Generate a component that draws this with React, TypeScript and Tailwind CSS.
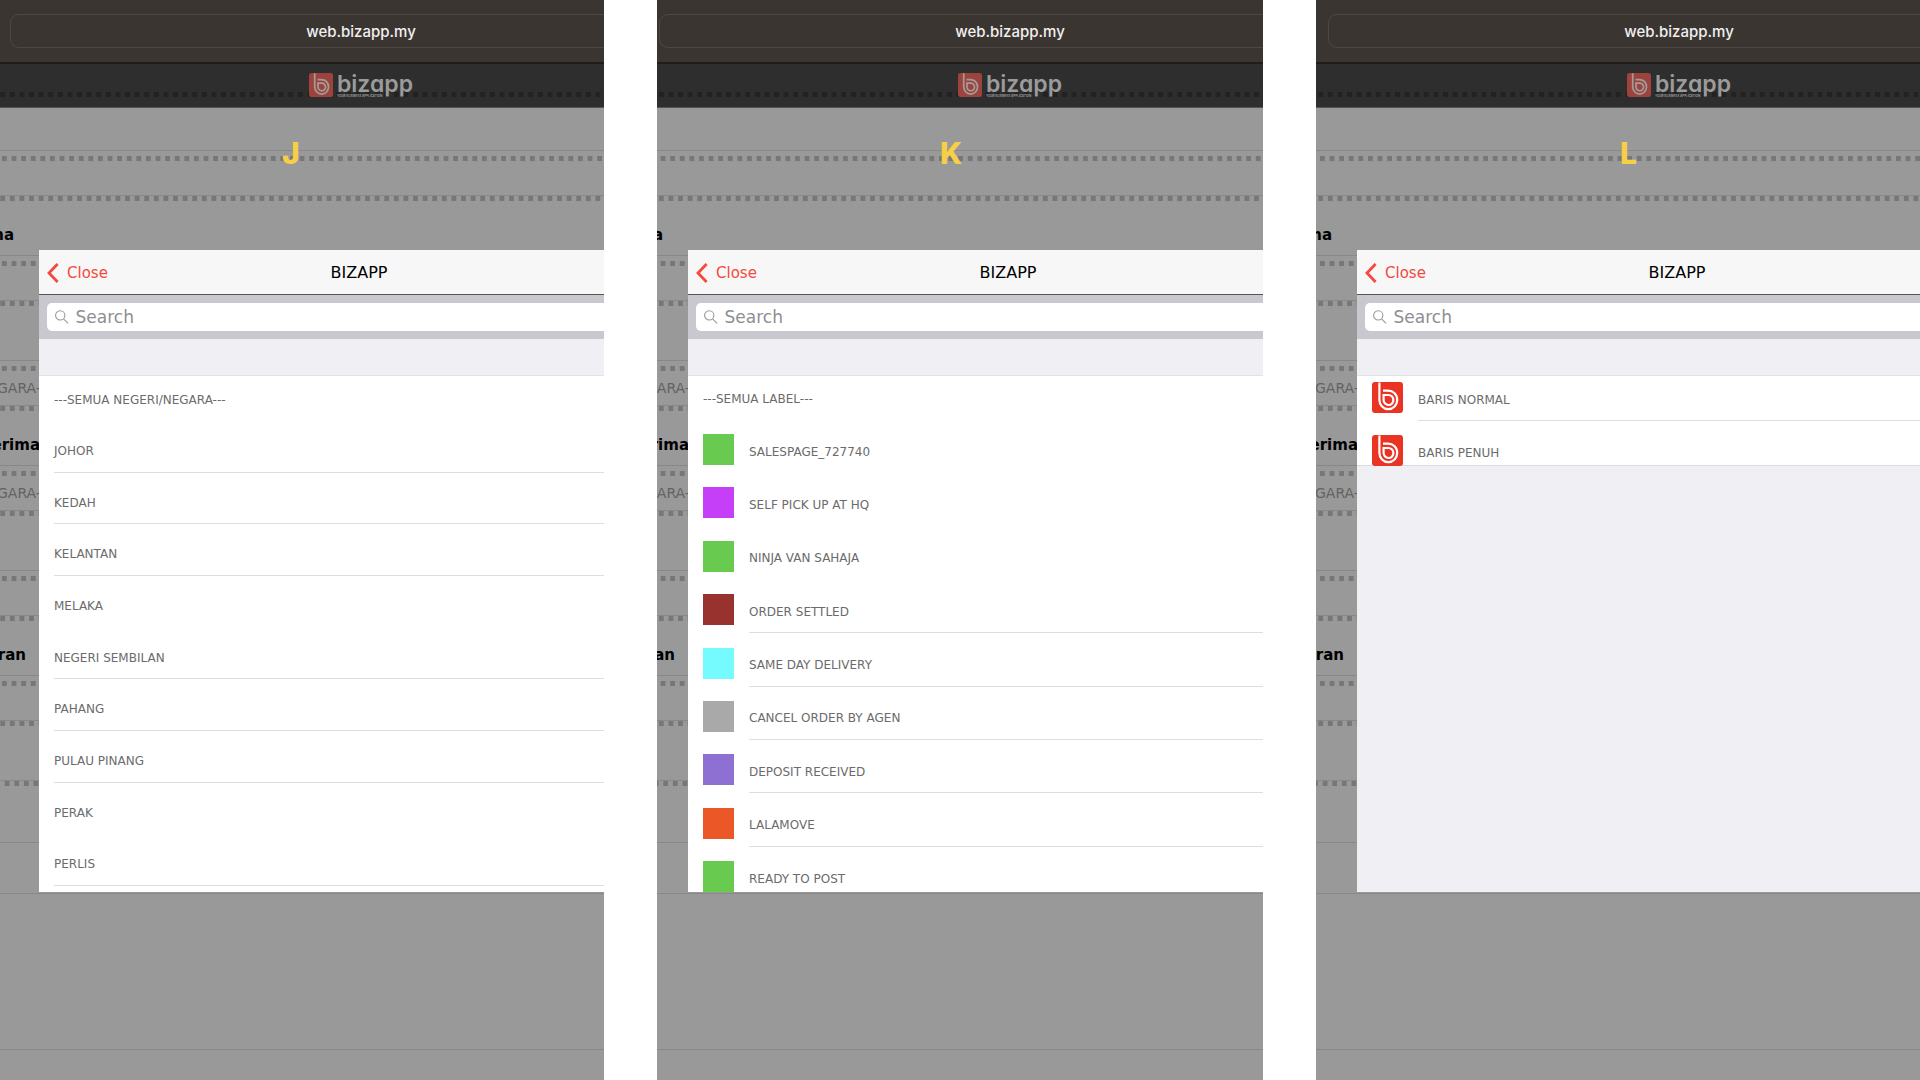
import React from 'react';

interface ListItem {
  label: string;
  color?: string;
  icon?: boolean;
  divider?: boolean;
}

interface Screen {
  id: string;
  shift: string;
  marker: string;
  listClass: string;
  heading?: string;
  items: ListItem[];
}

interface PageRow {
  height: string;
  dots?: 'a' | 'b' | 'c';
  title?: string;
  titleEnd?: string;
  value?: string;
}

const SCREENS: Screen[] = [
  {
    id: 'J',
    shift: '-ml-0.5',
    marker: 'left-[282px]',
    listClass: 'h-[516px] justify-between pb-[6px]',
    items: [
      { label: '---SEMUA NEGERI/NEGARA---' },
      { label: 'JOHOR', divider: true },
      { label: 'KEDAH', divider: true },
      { label: 'KELANTAN', divider: true },
      { label: 'MELAKA' },
      { label: 'NEGERI SEMBILAN', divider: true },
      { label: 'PAHANG', divider: true },
      { label: 'PULAU PINANG', divider: true },
      { label: 'PERAK' },
      { label: 'PERLIS', divider: true },
    ],
  },
  {
    id: 'K',
    shift: '-ml-2.5',
    marker: 'left-[283px]',
    listClass: 'h-[472px] justify-between',
    heading: '---SEMUA LABEL---',
    items: [
      { label: 'SALESPAGE_727740', color: 'bg-[#68cb50]' },
      { label: 'SELF PICK UP AT HQ', color: 'bg-[#c63ff8]' },
      { label: 'NINJA VAN SAHAJA', color: 'bg-[#68cb50]' },
      { label: 'ORDER SETTLED', color: 'bg-[#97322e]', divider: true },
      { label: 'SAME DAY DELIVERY', color: 'bg-[#75fbfd]', divider: true },
      { label: 'CANCEL ORDER BY AGEN', color: 'bg-[#a9a9a9]', divider: true },
      { label: 'DEPOSIT RECEIVED', color: 'bg-[#8e70d3]', divider: true },
      { label: 'LALAMOVE', color: 'bg-[#ec5728]', divider: true },
      { label: 'READY TO POST', color: 'bg-[#68cb50]' },
    ],
  },
  {
    id: 'L',
    shift: 'ml-0',
    marker: 'left-[304px]',
    listClass: 'h-[90px] gap-2 border-b border-[#dcdce0]',
    items: [
      { label: 'BARIS NORMAL', icon: true, divider: true },
      { label: 'BARIS PENUH', icon: true },
    ],
  },
];

const PAGE_ROWS: PageRow[] = [
  { height: 'h-[45px]', dots: 'a' },
  { height: 'h-[60px]', dots: 'b', title: 'Penerima', titleEnd: 'w-[16px]' },
  { height: 'h-[45px]', dots: 'a' },
  { height: 'h-[60px]', dots: 'b' },
  { height: 'h-[45px]', dots: 'a', value: 'NEGARA---' },
  { height: 'h-[60px]', dots: 'b', title: 'Penerima', titleEnd: 'w-[42px]' },
  { height: 'h-[45px]', dots: 'a', value: 'NEGARA---' },
  { height: 'h-[60px]', dots: 'b' },
  { height: 'h-[45px]', dots: 'a' },
  { height: 'h-[60px]', dots: 'b', title: 'Bayaran', titleEnd: 'w-[28px]' },
  { height: 'h-[45px]', dots: 'a' },
  { height: 'h-[60px]', dots: 'b' },
  { height: 'h-[62px]', dots: 'c' },
  { height: 'h-[51px]' },
  { height: 'h-[156px]' },
  { height: 'h-[31px]' },
];

const DOT_START = { a: 4, b: 2.3, c: 6.7 };

const Dots: React.FC<{ start: number; className: string }> = ({ start, className }) => (
  <svg className={`block h-[5px] w-full shrink-0 ${className}`} aria-hidden="true">
    <line x1={start - 9.6} y1="2.5" x2="100%" y2="2.5" stroke="currentColor" strokeWidth="5" strokeDasharray="4.8 4.8" />
  </svg>
);

const BizIcon: React.FC<{ className: string; fill: string; line: string }> = ({ className, fill, line }) => (
  <svg viewBox="0 0 31 31" className={className} aria-hidden="true">
    <rect width="31" height="31" rx="3" fill={fill} />
    <g fill="none" stroke={line} strokeWidth="2.2">
      <path d="M7.4 0.4V18a8.9 9.2 0 0 0 17.8 0c0-5.6-3.9-9.4-9.2-9.4h-5" />
      <path d="M11.6 13H16.2a4.9 5 0 1 1-4.6 5z" />
    </g>
  </svg>
);

const Row: React.FC<{ item: ListItem }> = ({ item }) => (
  <li className="flex h-[45px] shrink-0 pl-[15px]">
    {item.color && <span className={`mt-1.5 mr-[15px] size-[31px] shrink-0 ${item.color}`} />}
    {item.icon && <BizIcon className="mt-1.5 mr-[15px] size-[31px] shrink-0" fill="#ea3323" line="#ffffff" />}
    <span className={`flex flex-1 items-center border-b pt-[3px] ${item.divider ? 'border-[#dedede]' : 'border-transparent'}`}>
      {item.label}
    </span>
  </li>
);

const Popup: React.FC<{ screen: Screen }> = ({ screen }) => (
  <section className="absolute top-[250px] left-[41px] h-[642px] w-[642px] overflow-hidden bg-[#efeff4]">
    <header className="grid h-[45px] grid-cols-3 items-center border-b border-[#56565a] bg-[#f7f7f8] pt-0.5 pr-2.5 pl-2">
      <button type="button" className="flex items-center gap-2 justify-self-start text-[15px] text-[#f4493c]">
        <svg viewBox="0 0 12 20" className="h-5 w-3" fill="none" stroke="currentColor" strokeWidth="2.8" aria-hidden="true">
          <path d="M10.6 1 2 10l8.6 9" />
        </svg>
        Close
      </button>
      <h2 className="text-center text-base text-black">BIZAPP</h2>
    </header>

    <div className="bg-[#c9c8ce] p-2">
      <label className="flex h-7 items-center gap-[7px] rounded-[5px] bg-white pl-2">
        <svg viewBox="0 0 14 14" className="size-3.5" fill="none" stroke="#98989c" strokeWidth="1.1" aria-hidden="true">
          <circle cx="5.4" cy="5.4" r="4.8" />
          <path d="m8.9 8.9 4.6 4.6" />
        </svg>
        <input type="search" placeholder="Search" aria-label="Search" className="w-full bg-transparent pt-0.5 text-[17px] outline-none placeholder:text-[#8e8e93]" />
      </label>
    </div>

    <div className="mt-9 border-t border-[#e2e2e6] text-xs text-[#6b6b6b]">
      {screen.heading && <p className="flex h-[52px] items-center bg-white pb-[6px] pl-[15px]">{screen.heading}</p>}
      <ul className={`flex flex-col bg-white ${screen.listClass}`}>
        {screen.items.map(item => (
          <Row key={item.label} item={item} />
        ))}
      </ul>
    </div>
  </section>
);

const BrowserPanel: React.FC<{ screen: Screen }> = ({ screen }) => (
  <article className="relative overflow-hidden bg-[#999]">
    <div className={`relative w-full min-w-[726px] ${screen.shift}`}>
      {/* Address bar */}
      <div className="h-16 border-b-2 border-[#201c1a] bg-[#3b3532] px-3 pt-3.5">
        <div className="flex h-[34px] items-center justify-center rounded-[9px] border border-[#4d4845] pt-0.5 font-['Inter',sans-serif] text-[15px] font-medium text-[#f1f0f0]">
          web.bizapp.my
        </div>
      </div>

      {/* App header */}
      <div className="relative flex h-11 items-start justify-center border-b border-[#555] bg-[#2e2e2e] pt-[9px]">
        <Dots start={2.3} className="absolute top-7 left-0 text-[#222]" />
        <div className="relative flex gap-1">
          <BizIcon className="size-6" fill="#9b433c" line="#a39c9b" />
          <div className="w-[76px] font-['Inter',sans-serif] text-[#9b9b9b]">
            <div className="text-[23px] leading-[22px] font-semibold [font-feature-settings:'cv11']">bizapp</div>
            <div className="text-[3px] leading-[3px] font-bold whitespace-nowrap">YOUR BUSINESS APPLICATION</div>
          </div>
        </div>
      </div>

      {/* Dimmed form under the popup */}
      <div className="pt-[42px] font-['DejaVu_Sans',sans-serif]">
        {PAGE_ROWS.map((row, i) => (
          <div key={i} className={`border-t border-[#888] ${row.height}`}>
            {row.dots && <Dots start={DOT_START[row.dots]} className={row.dots === 'a' ? 'mt-[5px] text-[#777]' : 'text-[#777]'} />}
            {row.title && (
              <div className={`mt-6 flex justify-end text-[15px] leading-5 font-bold whitespace-nowrap text-black ${row.titleEnd}`}>{row.title}</div>
            )}
            {row.value && (
              <div className="mt-[7px] flex w-[53px] justify-end text-sm leading-5 whitespace-nowrap text-[#636363]">{row.value}</div>
            )}
          </div>
        ))}
      </div>

      <Popup screen={screen} />
    </div>

    <span className={`absolute top-[135px] font-['Inter',sans-serif] text-[30px] leading-9 font-extrabold text-[#f6cf46] ${screen.marker}`}>
      {screen.id}
    </span>
  </article>
);

const App: React.FC = () => (
  <main className="grid min-h-screen grid-cols-[604fr_606fr_604fr] gap-x-[53px] bg-white font-['DejaVu_Sans',sans-serif]">
    {SCREENS.map(screen => (
      <BrowserPanel key={screen.id} screen={screen} />
    ))}
  </main>
);

export default App;
